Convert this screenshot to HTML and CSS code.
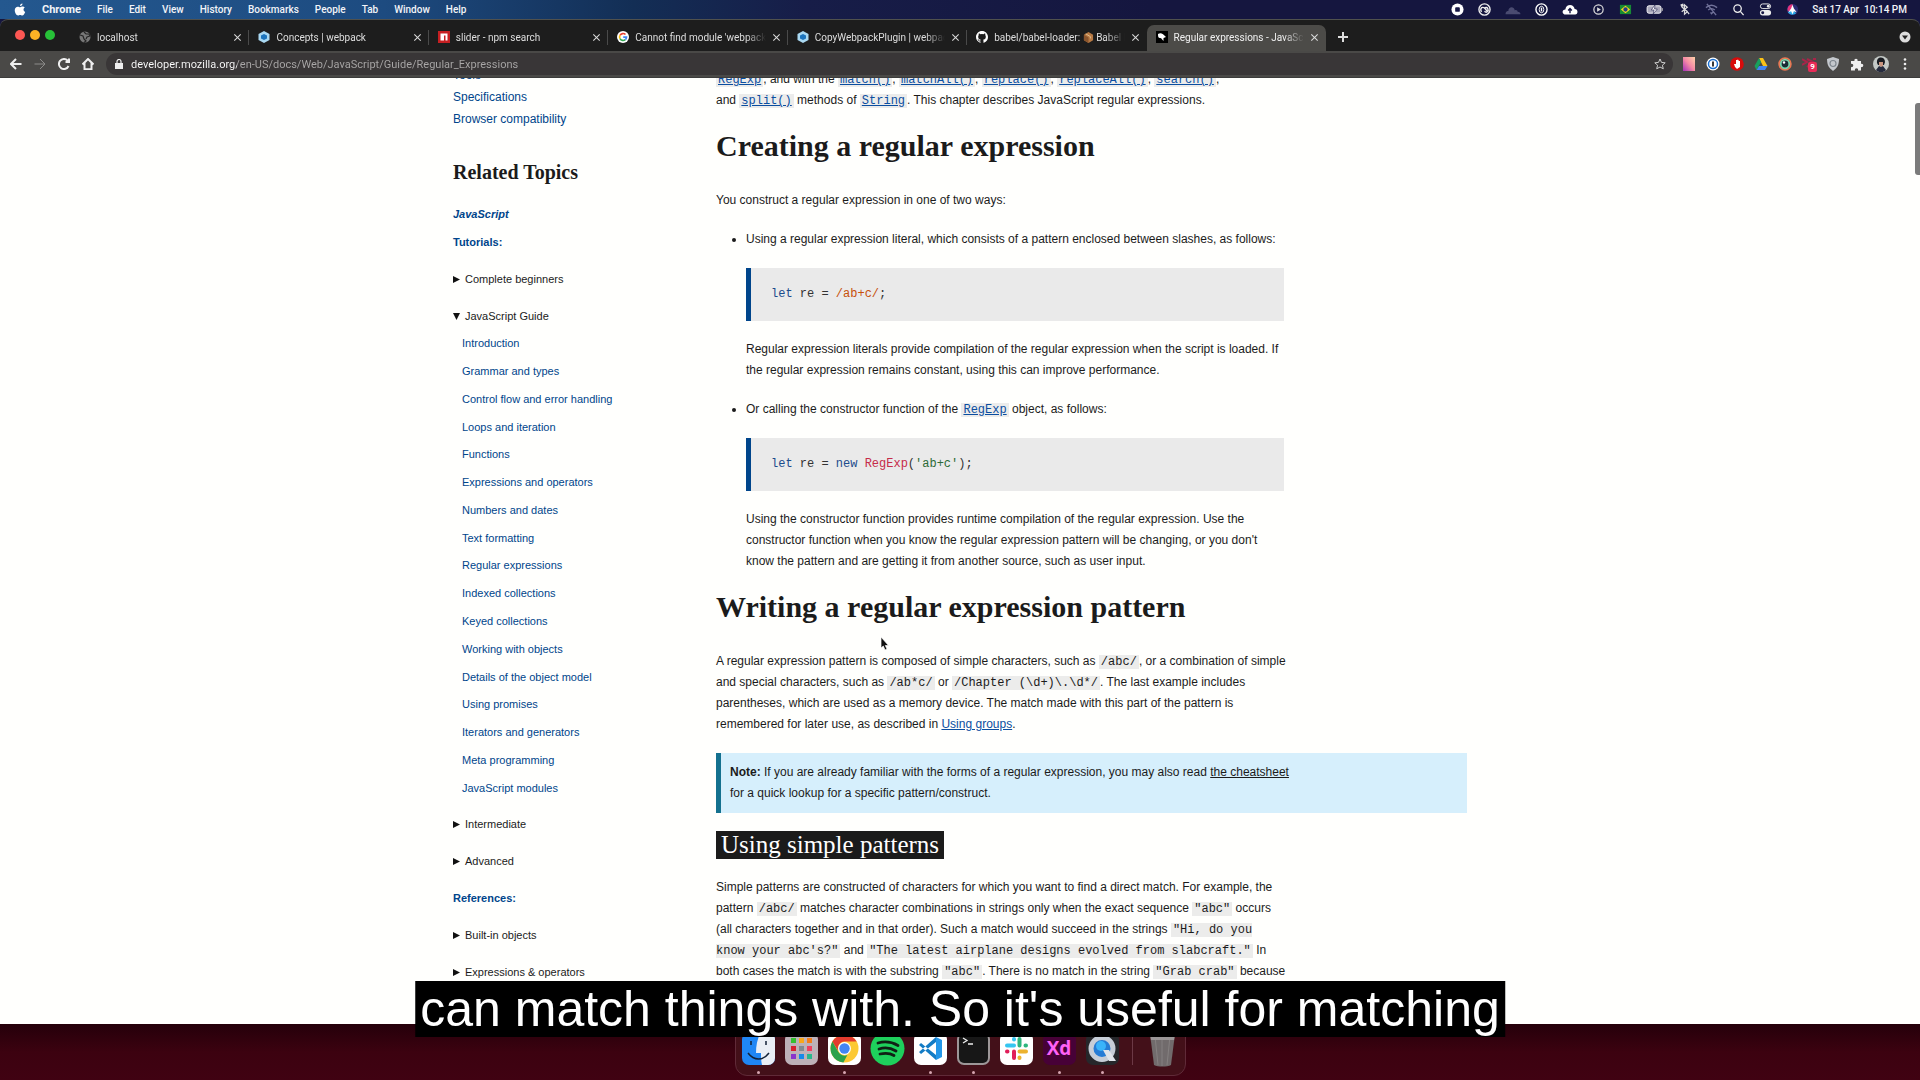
FILE: index.html
```html
<!DOCTYPE html>
<html lang="en">
<head>
<meta charset="utf-8">
<title>Regular expressions - JavaScript | MDN</title>
<link rel="stylesheet" href="styles.css">
</head>
<body>
<header class="menubar">
  <nav class="menus">
    <svg class="apple" width="12" height="13" viewBox="0 0 24 26" fill="#fff"><path d="M17 1c.2 2.700-2.200 5.200-5 5C11.800 3.500 14.200 1.200 17 1zM21.500 9.200c-3.700 2.300-3 7.300.9 8.800C21 21.600 19 25 16.500 25c-1.700 0-2.300-1-4.200-1-2 0-2.700 1-4.200 1C4.800 25 1.500 19.300 1.500 14.500c0-4.600 3-7.200 6-7.200 2 0 3.300 1.200 4.800 1.200 1.400 0 3-1.300 5.200-1.300 1.500 0 3 .7 4 2z"/></svg>
    <b>Chrome</b><span>File</span><span>Edit</span><span>View</span><span>History</span><span>Bookmarks</span><span>People</span><span>Tab</span><span>Window</span><span>Help</span>
  </nav>
  <div class="status">
    <svg viewBox="0 0 16 14"><circle cx="8" cy="7" r="6.500" fill="#fff"/><rect x="5.500" y="4.500" width="5" height="5" rx="1" fill="#161645"/></svg>
    <svg viewBox="0 0 16 14" fill="none" stroke="#eee" stroke-width="1.500"><circle cx="8" cy="7" r="6"/><path d="M5 9.500a3 3 0 0 1 0-4.500c2-1 3 0 6 4M8 9c2 2 5 0 3.500-3-1-2-3-1-4 0"/></svg>
    <svg class="wide" viewBox="0 0 18 14" fill="#4a4b70"><path d="M1 12c0-3 2-3.500 3-3.500C4 4 10 3 11 8c1-1 3 0 3 1.500 2 0 3 1 3 2.500z"/></svg>
    <svg viewBox="0 0 16 14" fill="none" stroke="#fff"><circle cx="8" cy="7" r="6" stroke-width="1.500"/><ellipse cx="8" cy="7" rx="2.500" ry="3.500"/><path d="M8 5v4" stroke-width="1.500"/></svg>
    <svg class="wide" viewBox="0 0 18 14"><path d="M4.500 12.500C0 12.500 0 7 4 7c.5-6 9-6.500 10-.5 4 0 4 6 .5 6z" fill="#fff"/><path d="M9 11V6M7 8l2-2 2 2" stroke="#161645" stroke-width="1.500" fill="none"/></svg>
    <svg viewBox="0 0 16 14"><circle cx="8" cy="7" r="5" fill="none" stroke="#ddd" stroke-width="1.300"/><path d="M6.500 4.500v5l4-2.500z" fill="#ddd"/></svg>
    <svg viewBox="0 0 16 14"><path d="M2 2h12v10H2z" fill="#168a35"/><path d="M8 3l5 4-5 4-5-4z" fill="#f7d61c"/><circle cx="8" cy="7" r="2.300" fill="#223a8c"/></svg>
    <svg class="batt" viewBox="0 0 20 14"><rect x="1.500" y="3" width="15" height="8" rx="2" fill="#aaa9bb" stroke="#fff"/><path d="M10 2L6 7.500h3L8 12l4.500-5.500h-3z" fill="#fff" stroke="#161645" stroke-width=".6"/><path d="M18 5.500v3" stroke="#aaa"/></svg>
    <svg viewBox="0 0 16 14" fill="none" stroke="#ddd" stroke-width="1.300"><path d="M5 4l6 5.500-3 2.500V2l3 2.500-6 5M10 8l3 4"/><path d="M4 3l3-1" stroke-width="3"/></svg>
    <svg viewBox="0 0 16 14" fill="none" stroke="#71729a" stroke-width="1.500"><path d="M2 5c4-3.500 8-3.500 12 0M4.500 7.500c2-2 5-2 7 0M7 10l1 1.500L9.500 10M3 1l10 12"/></svg>
    <svg viewBox="0 0 16 14" fill="none" stroke="#eee" stroke-width="1.400"><circle cx="7" cy="6" r="4"/><path d="M10 9l3.500 4"/></svg>
    <svg viewBox="0 0 16 14"><rect x="2.500" y="1" width="11" height="5" rx="2.500" fill="none" stroke="#eee"/><rect x="2" y="7.500" width="12" height="6" rx="3" fill="#eee"/><circle cx="11" cy="3.500" r="1.500" fill="#eee"/><circle cx="5" cy="10.500" r="1.600" fill="#161645"/></svg>
    <svg viewBox="0 0 16 14"><circle cx="8" cy="7" r="6" fill="#2b2d73"/><path d="M8 1a6 6 0 0 0-5 8l5-2z" fill="#e5337c"/><path d="M3 10a6 6 0 0 0 9 1L8 7z" fill="#29a9e8"/><path d="M8 2l1.500 4 3 4-3-1L8 12l-1.500-3-3 1 3-4z" fill="#fff"/></svg>
    <time>Sat 17 Apr&nbsp; 10:14 PM</time>
  </div>
</header>

<section class="window">
  <div class="tabstrip">
    <div class="lights"><i class="red"></i><i class="amber"></i><i class="green"></i></div>
    <div class="tabs">
      <div class="tab"><svg viewBox="0 0 12 12"><circle cx="6" cy="6" r="5.500" fill="#777"/><path d="M1 4l3 1 1 3 2 2-2 1.500M5 1l2 2 3 0 1 2-3 1-1 2" fill="none" stroke="#252525" stroke-width="1.200"/></svg><span>localhost</span><button aria-label="Close tab"></button></div>
      <div class="tab"><svg viewBox="0 0 12 12"><path d="M6 0l5.500 3v6L6 12 .5 9V3z" fill="#a9d8f2"/><path d="M6 3l3 1.500v3L6 9 3 7.500v-3z" fill="#1c74bd"/></svg><span>Concepts | webpack</span><button aria-label="Close tab"></button></div>
      <div class="tab"><svg viewBox="0 0 12 12"><path d="M0 0h12v12H0z" fill="#c61f22"/><path d="M2.500 2.500h7v7h-2v-5H6v5H2.500z" fill="#fff"/></svg><span>slider - npm search</span><button aria-label="Close tab"></button></div>
      <div class="tab"><svg viewBox="0 0 12 12"><circle cx="6" cy="6" r="6" fill="#fff"/><g fill="none" stroke-width="1.700"><path d="M8.500 3.500A3.500 3.500 0 0 0 3 4.300" stroke="#ea4335"/><path d="M3 4.300a3.500 3.500 0 0 0 0 3.400" stroke="#fbbc05"/><path d="M3 7.700a3.500 3.500 0 0 0 5.300 1" stroke="#34a853"/><path d="M8.300 8.700a3.500 3.500 0 0 0 1.200-2.500H6.200" stroke="#4285f4"/></g></svg><span>Cannot find module 'webpack-</span><button aria-label="Close tab"></button></div>
      <div class="tab"><svg viewBox="0 0 12 12"><path d="M6 0l5.500 3v6L6 12 .5 9V3z" fill="#a9d8f2"/><path d="M6 3l3 1.500v3L6 9 3 7.500v-3z" fill="#1c74bd"/></svg><span>CopyWebpackPlugin | webpack</span><button aria-label="Close tab"></button></div>
      <div class="tab"><svg viewBox="0 0 16 16"><path fill="#fff" d="M8 0C3.580 0 0 3.580 0 8c0 3.540 2.290 6.530 5.470 7.590.4.070.55-.17.55-.38v-1.330c-2.230.48-2.700-1.070-2.700-1.070-.36-.92-.89-1.170-.89-1.170-.73-.5.050-.48.050-.48.800.050 1.220.82 1.220.82.72 1.220 1.870.87 2.330.66.070-.52.280-.87.500-1.070-1.780-.2-3.640-.89-3.640-3.950 0-.87.310-1.590.82-2.150-.08-.2-.36-1.020.08-2.120 0 0 .67-.21 2.200.82a7.600 7.600 0 0 1 4 0c1.530-1.040 2.200-.82 2.200-.82.440 1.100.160 1.920.080 2.120.510.560.820 1.270.820 2.150 0 3.070-1.870 3.750-3.650 3.950.290.250.540.730.540 1.480v2.200c0 .210.150.460.550.380A8 8 0 0 0 16 8c0-4.420-3.580-8-8-8z"/></svg><span>babel/babel-loader: <svg class="box" viewBox="0 0 12 12"><path d="M1 3l5-3 5 3v6l-5 3-5-3z" fill="#b77943"/><path d="M1 3l5 3v6L1 9z" fill="#8a552d"/><path d="M3 2l5 3v2" stroke="#e5c395" fill="none"/></svg> Babel lo</span><button aria-label="Close tab"></button></div>
      <div class="tab active"><svg viewBox="0 0 12 12"><path d="M0 0h12v12H0z"/><path d="M2 3c3-2 5 0 8 3L7.500 7v3C6 9 6 7 4 7 2 7 2 5 2 3z" fill="#fff"/></svg><span>Regular expressions - JavaScri</span><button aria-label="Close tab"></button></div>
    </div>
    <button class="newtab" aria-label="New tab"></button>
    <button class="tabsearch" aria-label="Search tabs"><svg width="12" height="12" viewBox="0 0 12 12"><circle cx="6" cy="6" r="5.500" fill="#ddd"/><path d="M3 4.500h6L6 8.500z" fill="#222"/></svg></button>
  </div>
  <div class="toolbar">
    <button aria-label="Back"><svg viewBox="0 0 12 12"><path d="M11.500 6H1.500M6 1L1 6l5 5"/></svg></button>
    <button aria-label="Forward" class="dim"><svg viewBox="0 0 12 12"><path d="M.5 6h10M6 1l5 5-5 5"/></svg></button>
    <button aria-label="Reload"><svg viewBox="0 0 12 12"><path d="M10.500 8A5 5 0 1 1 9.500 2.500L11 4M11 .5V4H7.500"/></svg></button>
    <button aria-label="Home"><svg viewBox="0 0 12 12"><path d="M.5 6.500L6 1l5.500 5.500M2.500 5v6.200h7V5"/></svg></button>
    <label class="omnibox">
      <svg width="8" height="10" viewBox="0 0 8 10"><path d="M0 4h8v6H0z" fill="#eee"/><path d="M2 4V2.500a2 2 0 0 1 4 0V4" fill="none" stroke="#eee" stroke-width="1.200"/></svg>
      <input type="text" aria-label="Address" value="developer.mozilla.org/en-US/docs/Web/JavaScript/Guide/Regular_Expressions">
      <svg width="12" height="12" viewBox="0 0 12 12"><path d="M6 1l1.500 3.400 3.700.4-2.800 2.400.9 3.600L6 9l-3.300 1.800.9-3.600L.8 4.800l3.700-.4z" fill="none" stroke="#ccc"/></svg>
    </label>
    <div class="extensions">
      <svg viewBox="0 0 14 14"><defs><linearGradient id="pk" x1="0" y1="1" x2="1" y2="0"><stop offset="0" stop-color="#a430b8"/><stop offset=".5" stop-color="#f58aa5"/><stop offset="1" stop-color="#ffd2a8"/></linearGradient></defs><path d="M1 0h12v14H1z" fill="url(#pk)"/></svg>
      <svg viewBox="0 0 14 14"><circle cx="7" cy="7" r="6.500" fill="#fff"/><circle cx="7" cy="7" r="4.500" fill="none" stroke="#1a6fd0" stroke-width="1.500"/><path d="M7 4.500v5" stroke="#222" stroke-width="1.800"/></svg>
      <svg viewBox="0 0 14 14"><circle cx="7" cy="7" r="6.800" fill="#d80b0b"/><path d="M4 7l1 3 2 2 3-2V4H9L8 2.500 7 3 6 3v4z" fill="#fff"/></svg>
      <svg viewBox="0 0 14 14"><path d="M5 1h4l4.500 8H9z" fill="#fbc116"/><path d="M5 1L.5 9l2 4L7 5z" fill="#17a05d"/><path d="M2.500 13h8.500l2.500-4H5z" fill="#4086f4"/></svg>
      <svg viewBox="0 0 14 14"><circle cx="7" cy="7" r="5.900" fill="#192c34" stroke="#eb7651" stroke-width="1.700"/><circle cx="7" cy="7" r="4.300" fill="none" stroke="#7bd7ae" stroke-width="1.800"/><circle cx="6" cy="5.500" r="1.200" fill="#fff"/></svg>
      <span class="badged"><svg viewBox="0 0 14 14"><path d="M0 2l5 3-5 3M5 2l6 3-6 5M11 2h3" stroke="#a82449" stroke-width="2" fill="none"/></svg><em>9</em></span>
      <svg viewBox="0 0 14 14"><path d="M7 0l6 2c0 6-2 9-6 12C3 11 1 8 1 2z" fill="#c4c8cd"/><circle cx="7" cy="6.500" r="3" fill="none" stroke="#7e868e" stroke-width="1.200"/></svg>
      <svg viewBox="0 0 14 14"><path d="M1 4h3.500C3.500 1 8.500 1 7.500 4H11v3c3-1 3 4 0 3v3.500H8c1-3-4-3-3 0H1V10c3 1 3-4 0-3z" fill="#eee"/></svg>
      <svg class="avatar" viewBox="0 0 16 16"><circle cx="8" cy="8" r="8" fill="#c4c9c6"/><path d="M4 7C3 0 12 0 12 6l-1 3H5z" fill="#191c22"/><path d="M6 6h4v4L8 11 6 9z" fill="#c9957f"/><path d="M3 14l3-4 2 1 2-1 3 4c-3 3-7 3-10 0z" fill="#262b3d"/></svg>
      <svg viewBox="0 0 14 14" fill="#eee"><circle cx="7" cy="2.500" r="1.300"/><circle cx="7" cy="7" r="1.300"/><circle cx="7" cy="11.500" r="1.300"/></svg>
    </div>
  </div>

  <main class="viewport">
    <div class="doc">
      <aside class="sidebar">
        <ul class="toc"><li><a href="#">Tools</a></li><li><a href="#">Specifications</a></li><li><a href="#">Browser compatibility</a></li></ul>
        <h4>Related Topics</h4>
        <a class="group" href="#"><i>JavaScript</i></a>
        <a class="group tut" href="#">Tutorials:</a>
        <details><summary>Complete beginners</summary></details>
        <details open><summary>JavaScript Guide</summary>
          <ul class="guide">
            <li><a href="#">Introduction</a></li><li><a href="#">Grammar and types</a></li><li><a href="#">Control flow and error handling</a></li><li><a href="#">Loops and iteration</a></li><li><a href="#">Functions</a></li><li><a href="#">Expressions and operators</a></li><li><a href="#">Numbers and dates</a></li><li><a href="#">Text formatting</a></li><li><a href="#">Regular expressions</a></li><li><a href="#">Indexed collections</a></li><li><a href="#">Keyed collections</a></li><li><a href="#">Working with objects</a></li><li><a href="#">Details of the object model</a></li><li><a href="#">Using promises</a></li><li><a href="#">Iterators and generators</a></li><li><a href="#">Meta programming</a></li><li><a href="#">JavaScript modules</a></li>
          </ul>
        </details>
        <details class="after"><summary>Intermediate</summary></details>
        <details><summary>Advanced</summary></details>
        <a class="group ref" href="#">References:</a>
        <details><summary>Built-in objects</summary></details>
        <details><summary>Expressions &amp; operators</summary></details>
      </aside>
      <article class="article">
        <p><a href="#"><code>RegExp</code></a>, and with the <a href="#"><code>match()</code></a>, <a href="#"><code>matchAll()</code></a>, <a href="#"><code>replace()</code></a>, <a href="#"><code>replaceAll()</code></a>, <a href="#"><code>search()</code></a>,<br>and <a href="#"><code>split()</code></a> methods of <a href="#"><code>String</code></a>. This chapter describes JavaScript regular expressions.</p>
        <h2>Creating a regular expression</h2>
        <p>You construct a regular expression in one of two ways:</p>
        <ul class="ways">
          <li><p>Using a regular expression literal, which consists of a pattern enclosed between slashes, as follows:</p>
            <pre><span class="kw">let</span> re = <span class="rx">/ab+c/</span>;</pre>
            <p>Regular expression literals provide compilation of the regular expression when the script is loaded. If the regular expression remains constant, using this can improve performance.</p></li>
          <li><p>Or calling the constructor function of the <a href="#"><code>RegExp</code></a> object, as follows:</p>
            <pre><span class="kw">let</span> re = <span class="kw">new</span> <span class="cl">RegExp</span>(<span class="st">'ab+c'</span>);</pre>
            <p>Using the constructor function provides runtime compilation of the regular expression. Use the constructor function when you know the regular expression pattern will be changing, or you don't know the pattern and are getting it from another source, such as user input.</p></li>
        </ul>
        <h2>Writing a regular expression pattern</h2>
        <p>A regular expression pattern is composed of simple characters, such as <code>/abc/</code>, or a combination of simple and special characters, such as <code>/ab*c/</code> or <code>/Chapter (\d+)\.\d*/</code>. The last example includes parentheses, which are used as a memory device. The match made with this part of the pattern is remembered for later use, as described in <a href="#">Using groups</a>.</p>
        <div class="note"><p><strong>Note:</strong> If you are already familiar with the forms of a regular expression, you may also read <a href="#">the cheatsheet</a> for a quick lookup for a specific pattern/construct.</p></div>
        <h3>Using simple patterns</h3>
        <p>Simple patterns are constructed of characters for which you want to find a direct match. For example, the pattern <code>/abc/</code> matches character combinations in strings only when the exact sequence <code>"abc"</code> occurs (all characters together and in that order). Such a match would succeed in the strings <code>"Hi, do you know your abc's?"</code> and <code>"The latest airplane designs evolved from slabcraft."</code> In both cases the match is with the substring <code>"abc"</code>. There is no match in the string <code>"Grab crab"</code> because</p>
      </article>
    </div>
    <div class="scrollthumb"></div>
  </main>
</section>

<footer class="desktop">
  <div class="dock">
    <span class="app on"><svg viewBox="0 0 33 33"><rect width="33" height="33" rx="7" fill="#1f86f5"/><path d="M19 0h7a7 7 0 0 1 7 7v19a7 7 0 0 1-7 7h-6c-1-4-1-8-1-12h-5C14 14 15 7 19 0z" fill="#e9eef5"/><path d="M6 21c6 8 15 8 21 0M9 9v4M24 9v4" fill="none" stroke="#132238" stroke-width="1.500"/></svg></span>
    <span class="app"><svg viewBox="0 0 33 33"><rect width="33" height="33" rx="7" fill="#bdb1b8"/><path d="M6 6h5v5H6z" fill="#35c030"/><path d="M14 6h5v5h-5z" fill="#f9a71a"/><path d="M22 6h5v5h-5z" fill="#f47c18"/><path d="M6 14h5v5H6z" fill="#d8202f"/><path d="M14 14h5v5h-5z" fill="#828a90"/><path d="M22 14h5v5h-5z" fill="#f1405f"/><path d="M6 22h5v5H6z" fill="#8a34cc"/><path d="M14 22h5v5h-5z" fill="#1689ea"/><path d="M22 22h5v5h-5z" fill="#29b78c"/></svg></span>
    <span class="app on"><svg viewBox="0 0 33 33"><rect width="33" height="33" rx="7" fill="#fff"/><circle cx="16.500" cy="16.500" r="14" fill="#fcc934"/><path d="M4.400 9.500a14 14 0 0 1 24.200 0H16.500a7 7 0 0 0-6 10z" fill="#e33b2e"/><path d="M4.400 9.500l6 10.500a7 7 0 0 0 9 3l-4 7.500A14 14 0 0 1 4.400 9.500z" fill="#2ba24c"/><circle cx="16.500" cy="16.500" r="6.500" fill="#fff"/><circle cx="16.500" cy="16.500" r="5.200" fill="#4285f4"/></svg></span>
    <span class="app"><svg viewBox="0 0 33 33"><circle cx="16.500" cy="16.500" r="17" fill="#1ed05c"/><path d="M7 11c7-2 14-1 20 2.500M8 17c6-2 12-1 17 2M9 22c5-1 10-1 14 1.500" fill="none" stroke="#102015" stroke-width="2.800" stroke-linecap="round"/></svg></span>
    <span class="app on"><svg viewBox="0 0 33 33"><rect width="33" height="33" rx="7" fill="#fff"/><path d="M22 5l6 3v17l-6 3z" fill="#2496e8"/><path d="M5 13l2-2 15 12v5zM5 20l2 2 15-12V5z" fill="#147cc5"/></svg></span>
    <span class="app on"><svg viewBox="0 0 33 33"><rect width="33" height="33" rx="7" fill="#9d9798"/><rect x="2" y="2" width="29" height="29" rx="5" fill="#171717"/><path d="M6 6l4 2.500L6 11M11 12h5" fill="none" stroke="#eee" stroke-width="1.300"/></svg></span>
    <span class="app"><svg viewBox="0 0 33 33"><rect width="33" height="33" rx="7" fill="#fff"/><g fill="none" stroke-width="4" stroke-linecap="round"><path d="M14 7v.5M7 13.500h7" stroke="#36c5f0"/><path d="M19.500 7v6.500M26 13.500h-.5" stroke="#2eb67d"/><path d="M19.500 19.500H26M19.500 26v-.5" stroke="#ecb22e"/><path d="M14 19.500V26M7 19.500h.5" stroke="#e01e5a"/></g></svg></span>
    <span class="app xd on">Xd</span>
    <span class="app on"><svg viewBox="0 0 33 33"><rect width="33" height="33" rx="7" fill="#26272b"/><circle cx="16" cy="16.500" r="11" fill="#267cd5" stroke="#c6cdd7" stroke-width="5"/><circle cx="15" cy="14" r="5" fill="#39b3fa"/><path d="M17 18h6l7 11h-7z" fill="#e0e4ea"/></svg></span>
    <span class="sep"></span>
    <span class="app"><svg viewBox="0 0 33 33"><path d="M4 2h25l-4 31c-4 2-13 2-17 0z" fill="#716b6c"/><path d="M9 4l3 29M24 4l-3 29M16 4v30" stroke="#858080" stroke-width="1"/><path d="M4 2h25l-1 6H5z" fill="#9a9697"/></svg></span>
  </div>
</footer>
<div class="caption">can match things with. So it's useful for matching</div>
<svg class="cursor" width="10" height="15" viewBox="0 0 10 15"><path d="M1 1v11l2.300-2L5 14l2-1-1.700-3.500H8.500z" fill="#111" stroke="#fff" stroke-width=".7"/></svg>
</body>
</html>
```
FILE: styles.css
```css
* { box-sizing: border-box; }
body {
  margin: 0;
  height: 100vh;
  display: flex;
  flex-direction: column;
  overflow: hidden;
  position: relative;
  background: #15163f;
  font-family: "Liberation Sans", Arial, sans-serif;
  font-size: 12px;
  color: #1b1b1b;
}
svg { display: block; flex: none; }
button { border: 0; padding: 0; background: none; color: inherit; font: inherit; }
ul { list-style: none; margin: 0; padding: 0; }
a { color: #00458b; text-decoration: none; }

/* System menu bar */
.menubar {
  height: 19px;
  flex: none;
  display: flex;
  justify-content: space-between;
  align-items: center;
  padding: 0 13px 1px 14px;
  background: linear-gradient(90deg, #24588f 0, #1d4b80 20%, #132e55 33%, #171d48 42%, #15163f 60%);
  color: #f2f4f8;
  font-family: Roboto, sans-serif;
  font-size: 10px;
  font-weight: 500;
}
.menubar b { font-size: 11px; }
.menus, .status { display: flex; align-items: center; }
.menus { gap: 16px; }
.status { gap: 12px; }
.status svg { width: 15px; height: 13px; }
.status .wide { width: 18px; }
.status .batt { width: 20px; }

/* Browser window */
.window {
  flex: 1;
  min-height: 0;
  display: flex;
  flex-direction: column;
  border-top: 1px solid #50514d;
  border-radius: 8px 8px 0 0;
  overflow: hidden;
  background: #1d1d1d;
}
.tabstrip {
  height: 31px;
  flex: none;
  display: flex;
  align-items: flex-end;
  padding: 0 9px 0 15px;
  color: #dedede;
  font-family: Roboto, sans-serif;
  font-size: 10px;
}
.lights { display: flex; gap: 5px; width: 55px; height: 21px; }
.lights i { width: 10px; height: 10px; border-radius: 50%; }
.red { background: #fc5753; }
.amber { background: #fdb225; }
.green { background: #27c138; }
.tabs { display: grid; grid-template-columns: repeat(7, 1fr); width: 1256px; }
.tab {
  height: 26px;
  display: flex;
  align-items: center;
  gap: 6px;
  padding: 0 7px 2px 9px;
  min-width: 0;
  position: relative;
}
.tab > svg { width: 12px; height: 12px; }
.tab span {
  flex: 1;
  overflow: hidden;
  white-space: nowrap;
  mask-image: linear-gradient(90deg, #000 calc(100% - 20px), transparent);
}
.tab .box { display: inline-block; width: 11px; height: 11px; vertical-align: -2px; }
.tab:not(.active)::after {
  content: "";
  position: absolute;
  right: 0;
  top: 5px;
  width: 1px;
  height: 15px;
  background: #4a4a4a;
}
.tab:nth-child(6)::after { display: none; }
.tab button, .newtab {
  width: 9px;
  height: 9px;
  flex: none;
  transform: rotate(45deg);
  background:
    linear-gradient(#dedede, #dedede) center / 9px 1px no-repeat,
    linear-gradient(#dedede, #dedede) center / 1px 9px no-repeat;
}
.newtab {
  transform: none;
  width: 10px;
  height: 10px;
  margin: 0 0 9px 12px;
  background-size: 10px 2px, 2px 10px;
}
.active { background: #4c4b48; border-radius: 7px 7px 0 0; color: #f0f0f0; }
.tabsearch { margin: 0 0 8px auto; }

.toolbar {
  height: 27px;
  flex: none;
  display: flex;
  align-items: center;
  gap: 12px;
  padding: 0 8px 0 10px;
  background: #4a4947;
  border-bottom: 1px solid #3c3c3b;
}
.toolbar button svg { width: 12px; height: 12px; fill: none; stroke: #efefef; stroke-width: 2; }
.toolbar button.dim svg { stroke: #8c8c8a; stroke-width: 1; }
.omnibox {
  flex: 1;
  display: flex;
  align-items: center;
  gap: 8px;
  height: 22px;
  border-radius: 11px;
  background: #393637;
  padding: 0 7px 0 9px;
}
.omnibox input {
  flex: 1;
  min-width: 0;
  border: 0;
  padding: 0;
  outline: 0;
  font-family: Roboto, sans-serif;
  font-size: 11px;
  color: transparent;
  background: linear-gradient(90deg, #fff 106px, #aaa8a8 106px);
  background-clip: text;
}
.extensions { display: flex; align-items: center; gap: 10px; margin-left: -3px; }
.extensions svg { width: 14px; height: 14px; }
.extensions .avatar { width: 16px; height: 16px; margin: 0 -1px; }
.badged { position: relative; }
.badged em {
  position: absolute;
  left: 6px;
  top: 5px;
  width: 9px;
  height: 10px;
  border-radius: 2px;
  background: #e72b57;
  color: #fff;
  font: 700 8px/10px Roboto, sans-serif;
  text-align: center;
}

/* Page */
.viewport { flex: 1; min-height: 0; position: relative; overflow: hidden; background: #fffffd; }
.scrollthumb {
  position: absolute;
  top: 25px;
  right: 0;
  width: 5px;
  height: 72px;
  border-radius: 3px 0 0 3px;
  background: #7b7b7b;
}
.doc {
  display: grid;
  grid-template-columns: 263px 1fr;
  max-width: 1014px;
  margin: -14px auto 0;
}
.sidebar { font-size: 11px; line-height: 21px; }
.toc { font-size: 12px; line-height: 22px; }
.sidebar h4 {
  margin: 28px 0 18px;
  font: 700 20px/28px "Liberation Serif", serif;
}
.group { display: block; font-weight: 700; margin-top: 16px; }
h4 + .group { margin-top: 0; }
.tut { margin-top: 7px; }
details { margin-top: 16px; }
.after { margin-top: 12px; }
summary { display: flex; align-items: center; gap: 5px; list-style: none; }
summary::before {
  content: "";
  width: 7px;
  height: 7px;
  background: #111;
  clip-path: polygon(0 0, 100% 50%, 0 100%);
}
[open] > summary::before { clip-path: polygon(0 0, 100% 0, 50% 100%); }
.guide {
  display: grid;
  grid-auto-rows: 1fr;
  align-items: center;
  height: 472px;
  margin-top: 3px;
  padding-left: 9px;
}

.article { padding-top: 5px; line-height: 21px; }
.article p { margin: 0 0 18px; max-width: 570px; }
.article a { color: #0b4ea0; text-decoration: underline; }
.article h2 { margin: 0 0 27px; font: 700 30px/34px "Liberation Serif", serif; }
.article h3 {
  width: fit-content;
  margin: 0 0 18px;
  padding: 0 5px;
  background: #1b1b1b;
  color: #fff;
  font: 400 25px/28px "Liberation Serif", serif;
}
code, pre { font-family: "Liberation Mono", "Courier New", monospace; font-size: 12px; }
code { background: #ececeb; padding: 0 2px; line-height: 1; }
.ways { padding-left: 30px; max-width: 568px; list-style: disc; }
pre {
  margin: 0 0 18px;
  padding: 16px 20px;
  border-left: 5px solid #00458b;
  background: #eaeaea;
  color: #333;
}
.kw { color: #1c4b8c; }
.rx { color: #c7500b; }
.cl { color: #c62b49; }
.st { color: #2d6a37; }
.note {
  margin-bottom: 18px;
  padding: 9px;
  border-left: 5px solid #14718f;
  background: #d6effc;
}
.note p { margin: 0; }
.note a { color: #1b1b1b; }

/* Desktop and dock */
.desktop {
  height: 56px;
  flex: none;
  display: flex;
  justify-content: center;
  align-items: flex-end;
  padding-bottom: 4px;
  background: linear-gradient(#25000a, #3c0210 50%, #400212);
}
.dock {
  display: flex;
  gap: 10px;
  padding: 6px 6px 10px;
  border: 1px solid #602a38;
  border-radius: 12px;
  background: #431019;
}
.app { position: relative; width: 33px; height: 33px; }
.app svg { overflow: visible; }
.on::after {
  content: "";
  position: absolute;
  left: 15px;
  bottom: -9px;
  width: 3px;
  height: 3px;
  border-radius: 50%;
  background: #d6a5b0;
}
.xd {
  border-radius: 7px;
  background: #470137;
  color: #ff61f6;
  font: 700 19px/33px "Open Sans", sans-serif;
  text-align: center;
}
.sep { width: 1px; margin: 0 3px; background: #6c3945; }

.caption {
  position: absolute;
  left: 50%;
  bottom: 43px;
  transform: translateX(-50%);
  padding: 0 5px;
  background: #000;
  color: #fff;
  font-size: 50px;
  line-height: 56px;
  white-space: nowrap;
}
.cursor { position: absolute; left: 880px; top: 636px; }
```
